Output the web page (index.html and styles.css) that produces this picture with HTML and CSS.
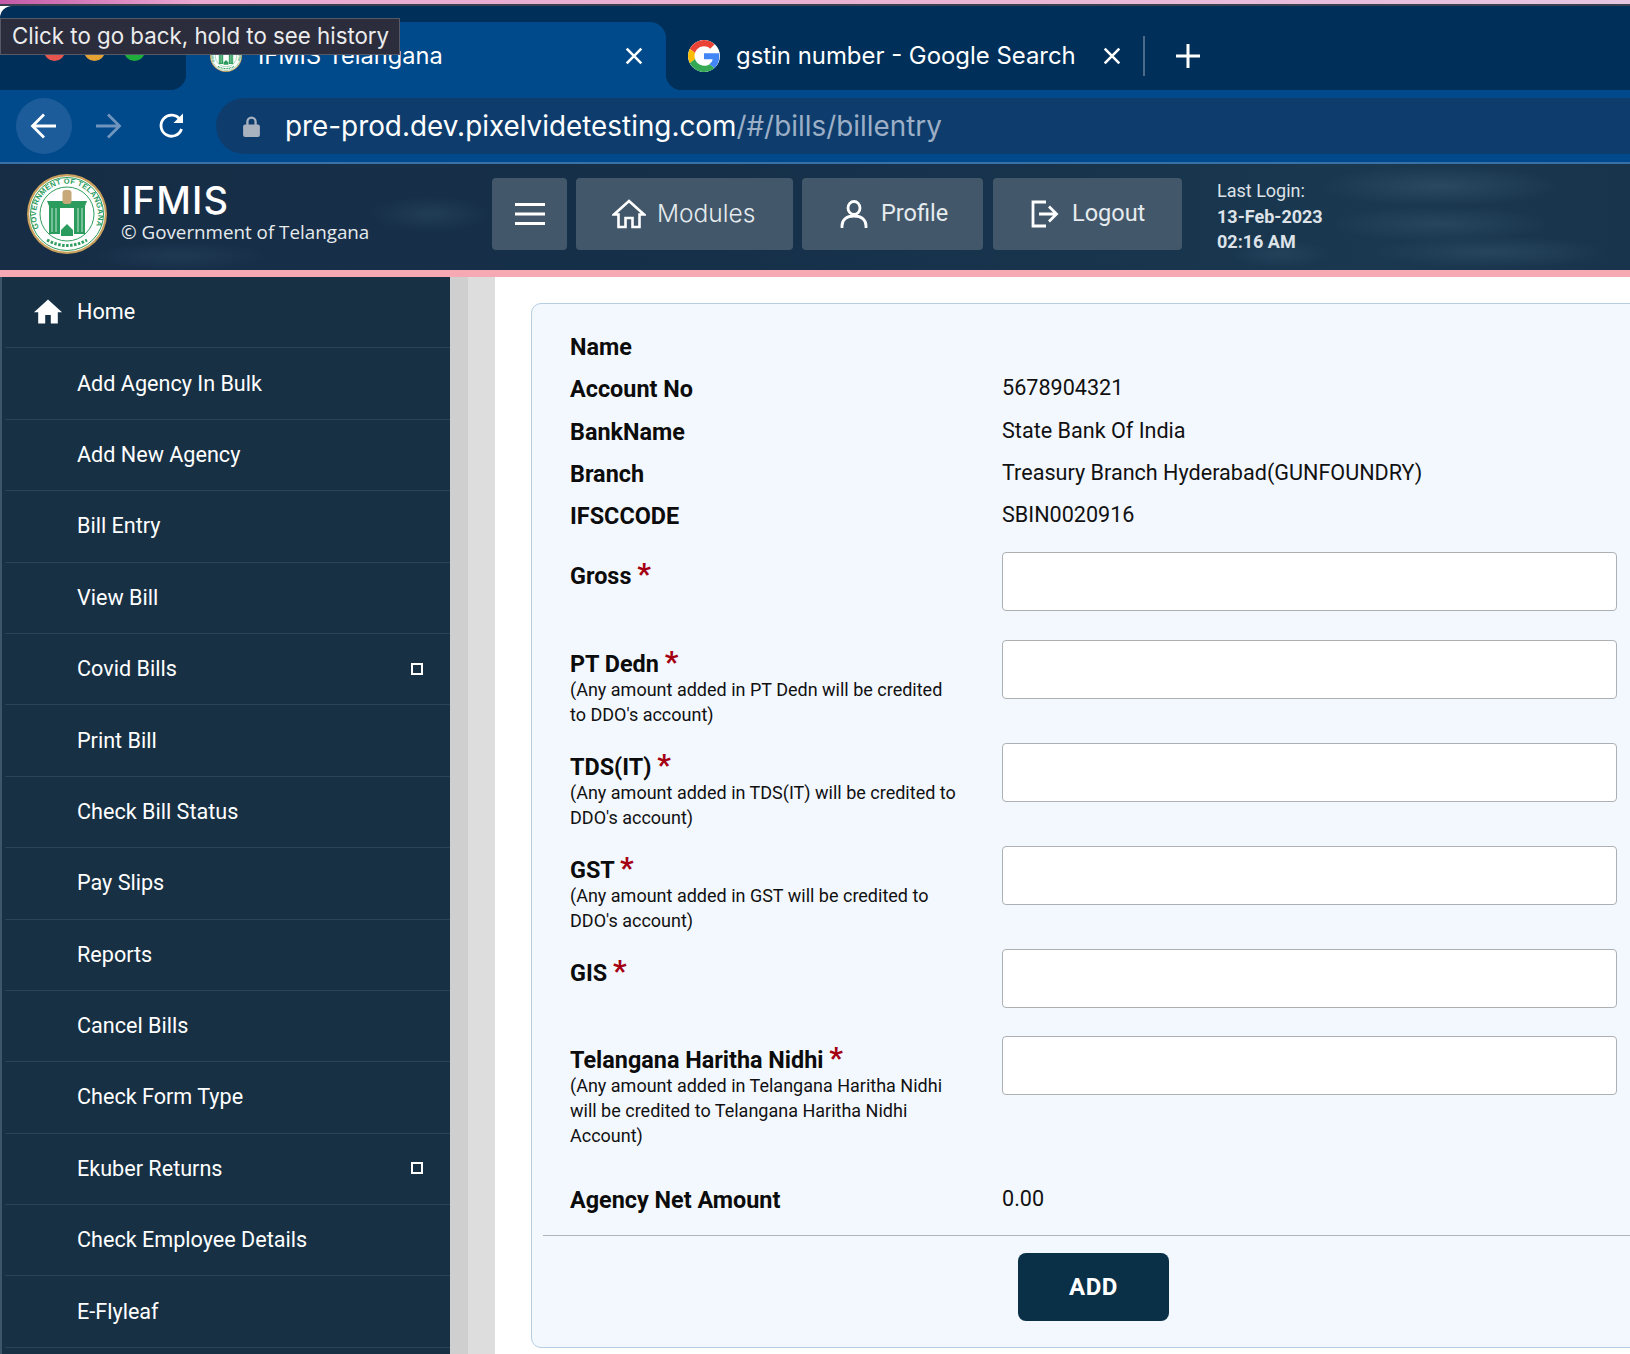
FILE: index.html
```html
<!DOCTYPE html>
<html lang="en">
<head>
  <meta charset="UTF-8"/>
  <title>IFMIS Telangana</title>
  <link rel="stylesheet" href="styles.css">
</head>
<body>
  <svg class="defs" width="0" height="0">
    <defs>
      <symbol id="emblem" viewBox="0 0 80 80">
        <circle cx="40" cy="40" r="40" fill="#c9a15c"/>
        <circle cx="40" cy="40" r="37.800" fill="#fff"/>
        <circle cx="40" cy="40" r="36.500" fill="none" stroke="#2f9e5f" stroke-width="1"/>
        <circle cx="40" cy="40" r="27" fill="none" stroke="#2f9e5f" stroke-width="1"/>
        <path id="emblem-arc" d="M12 54a31 31 0 1 1 56 0" fill="none"/>
        <text class="emblem-text"><textPath href="#emblem-arc" textLength="122">GOVERNMENT OF TELANGANA</textPath></text>
        <path d="M20 27h40l-2 5v28H22V32z" fill="#2c9c5e"/>
        <rect x="33" y="34" width="14" height="26" fill="#fff"/>
        <path d="M34 62v-6l6-6 6 6v6z" fill="#2c9c5e"/>
        <rect x="35.500" y="16" width="9" height="14" rx="3" fill="#c7a878"/>
        <path d="M25 34v24M29 34v24M51 34v24M55 34v24" stroke="#bfe5cf" stroke-width="1"/>
        <path d="M20 66q20 11 40 0" fill="none" stroke="#2f9e5f" stroke-width="3" stroke-dasharray="2.500 1.500"/>
      </symbol>
    </defs>
  </svg>

  <div class="top-strip"></div>

  <div class="tab-strip">
    <div class="traffic">
      <span class="light red"></span>
      <span class="light amber"></span>
      <span class="light green"></span>
    </div>
    <div class="tab tab-active">
      <svg class="favicon" viewBox="0 0 80 80"><use href="#emblem"/></svg>
      <span class="tab-title">IFMIS Telangana</span>
      <svg class="tab-close" viewBox="0 0 16 16"><path d="M1.500 1.500l13 13M14.500 1.500l-13 13"/></svg>
    </div>
    <div class="tab tab-other">
      <svg class="favicon google" viewBox="0 0 48 48">
        <path fill="#EA4335" d="M24 9.5c3.54 0 6.71 1.22 9.21 3.6l6.85-6.85C35.9 2.38 30.47 0 24 0 14.62 0 6.51 5.38 2.56 13.22l7.98 6.19C12.43 13.72 17.74 9.5 24 9.5z"/>
        <path fill="#4285F4" d="M46.98 24.55c0-1.57-.15-3.09-.38-4.55H24v9.02h12.94c-.58 2.96-2.26 5.48-4.78 7.18l7.73 6c4.51-4.18 7.09-10.36 7.09-17.65z"/>
        <path fill="#FBBC05" d="M10.53 28.59c-.48-1.45-.76-2.99-.76-4.59s.27-3.14.76-4.59l-7.98-6.19C.92 16.46 0 20.12 0 24c0 3.88.92 7.54 2.56 10.78l7.97-6.19z"/>
        <path fill="#34A853" d="M24 48c6.48 0 11.93-2.13 15.89-5.81l-7.73-6c-2.15 1.45-4.92 2.3-8.16 2.3-6.26 0-11.57-4.22-13.47-9.91l-7.98 6.19C6.51 42.62 14.62 48 24 48z"/>
      </svg>
      <span class="tab-title">gstin number - Google Search</span>
      <svg class="tab-close" viewBox="0 0 16 16"><path d="M1.500 1.500l13 13M14.500 1.500l-13 13"/></svg>
      <span class="tab-divider"></span>
      <svg class="new-tab" viewBox="0 0 26 26"><path d="M13 1v24M1 13h24"/></svg>
    </div>
    <div class="tooltip">Click to go back, hold to see history</div>
  </div>

  <div class="toolbar">
    <span class="nav-btn nav-btn-hover">
      <svg viewBox="0 0 28 28"><path d="M26 14H3M14 2.500L2.500 14 14 25.500"/></svg>
    </span>
    <span class="nav-btn nav-btn-off">
      <svg viewBox="0 0 28 28"><path d="M2 14h23M14 2.500L25.500 14 14 25.500"/></svg>
    </span>
    <span class="nav-btn">
      <svg viewBox="0 0 28 28"><path d="M23.500 17a10.500 10.500 0 1 1-1.500-9.500"/><path class="solid" d="M25 1.500V11h-9.500z"/></svg>
    </span>
    <div class="omnibox">
      <svg class="lock" viewBox="0 0 16 20"><path d="M3 8V5.500a5 5 0 0 1 10 0V8h1a2 2 0 0 1 2 2v8a2 2 0 0 1-2 2H2a2 2 0 0 1-2-2v-8a2 2 0 0 1 2-2zm2.200 0h5.600V5.500a2.800 2.800 0 0 0-5.600 0z"/></svg>
      <span class="url">pre-prod.dev.pixelvidetesting.com<span class="url-path">/#/bills/billentry</span></span>
    </div>
  </div>

  <header class="site-header">
    <div class="brand">
      <svg class="logo" viewBox="0 0 80 80"><use href="#emblem"/></svg>
      <div class="brand-text">
        <div class="brand-name">IFMIS</div>
        <div class="brand-sub">© Government of Telangana</div>
      </div>
    </div>
    <nav class="top-nav">
      <a class="nav-item nav-menu">
        <svg viewBox="0 0 30 24"><path d="M0 2.500h30M0 12h30M0 21.500h30"/></svg>
      </a>
      <a class="nav-item nav-modules">
        <svg viewBox="0 0 34 30"><path d="M17 2L32 15.500h-4.500V28H20.500V19h-7v9H6.500V15.500H2z"/></svg>
        <span class="modules-label">Modules</span>
      </a>
      <a class="nav-item nav-profile">
        <svg viewBox="0 0 28 28"><ellipse cx="14" cy="8" rx="6" ry="6.500"/><path d="M2 28v-2c0-6 4-10 12-10s12 4 12 10v2"/></svg>
        <span>Profile</span>
      </a>
      <a class="nav-item nav-logout">
        <svg viewBox="0 0 28 28"><path d="M15 2H2v24h13M8 14h17M18 6.500l7.500 7.500-7.500 7.500"/></svg>
        <span>Logout</span>
      </a>
    </nav>
    <div class="last-login">
      <div>Last Login:</div>
      <div class="strong">13-Feb-2023</div>
      <div class="strong">02:16 AM</div>
    </div>
  </header>
  <div class="header-rule"></div>

  <div class="page">
    <aside class="sidebar">
      <a class="side-item">
        <svg class="side-home" viewBox="2 3 20 17"><path d="M10 20v-6h4v6h5v-8h3L12 3 2 12h3v8z"/></svg>
        Home
      </a>
      <a class="side-item">Add Agency In Bulk</a>
      <a class="side-item">Add New Agency</a>
      <a class="side-item">Bill Entry</a>
      <a class="side-item">View Bill</a>
      <a class="side-item">Covid Bills<span class="side-toggle"></span></a>
      <a class="side-item">Print Bill</a>
      <a class="side-item">Check Bill Status</a>
      <a class="side-item">Pay Slips</a>
      <a class="side-item">Reports</a>
      <a class="side-item">Cancel Bills</a>
      <a class="side-item">Check Form Type</a>
      <a class="side-item">Ekuber Returns<span class="side-toggle"></span></a>
      <a class="side-item">Check Employee Details</a>
      <a class="side-item">E-Flyleaf</a>
    </aside>
    <div class="scroll-thumb"></div>
    <div class="scroll-track"></div>

    <main class="content">
      <section class="card">
        <div class="card-body">
          <div class="info-row"><label>Name</label><span class="info-value"></span></div>
          <div class="info-row"><label>Account No</label><span class="info-value">5678904321</span></div>
          <div class="info-row"><label>BankName</label><span class="info-value">State Bank Of India</span></div>
          <div class="info-row"><label>Branch</label><span class="info-value">Treasury Branch Hyderabad(GUNFOUNDRY)</span></div>
          <div class="info-row"><label>IFSCCODE</label><span class="info-value">SBIN0020916</span></div>

          <div class="field-row first">
            <div class="field-label"><label>Gross <span class="req">*</span></label></div>
            <input type="text">
          </div>
          <div class="field-row">
            <div class="field-label"><label>PT Dedn <span class="req">*</span></label><small>(Any amount added in PT Dedn will be credited to DDO's account)</small></div>
            <input type="text">
          </div>
          <div class="field-row">
            <div class="field-label"><label>TDS(IT) <span class="req">*</span></label><small>(Any amount added in TDS(IT) will be credited to DDO's account)</small></div>
            <input type="text">
          </div>
          <div class="field-row">
            <div class="field-label"><label>GST <span class="req">*</span></label><small>(Any amount added in GST will be credited to DDO's account)</small></div>
            <input type="text">
          </div>
          <div class="field-row">
            <div class="field-label"><label>GIS <span class="req">*</span></label></div>
            <input type="text">
          </div>
          <div class="field-row">
            <div class="field-label"><label>Telangana Haritha Nidhi <span class="req">*</span></label><small>(Any amount added in Telangana Haritha Nidhi will be credited to Telangana Haritha Nidhi Account)</small></div>
            <input type="text">
          </div>

          <div class="info-row net-row"><label>Agency Net Amount</label><span class="info-value">0.00</span></div>
        </div>
        <div class="card-footer">
          <button class="add-btn">ADD</button>
        </div>
      </section>
    </main>
  </div>
</body>
</html>
```

FILE: styles.css
```css
* {
  box-sizing: border-box;
}

html, body {
  margin: 0;
  width: 1630px;
  height: 1354px;
  overflow: hidden;
}

body {
  font-family: Roboto, sans-serif;
  background: #fff;
  color: #000;
}

.defs {
  display: block;
  height: 0;
}

.emblem-text {
  font-family: "Liberation Sans", sans-serif;
  font-size: 7.600px;
  font-weight: bold;
  fill: #2c9c5e;
}

/* browser chrome */
.top-strip {
  height: 6px;
  background: linear-gradient(90deg, #c45aa8 0, #e9a9d2 12%, #eab4d4 55%, #e6c6e2 100%);
  border-bottom: 2px solid #39404f;
}

.tab-strip {
  position: relative;
  display: flex;
  align-items: flex-end;
  height: 84px;
  background: #002f59;
  border-top-left-radius: 12px;
  font-family: Inter, sans-serif;
  color: #fff;
}

.traffic {
  display: flex;
  gap: 19px;
  width: 186px;
  height: 68px;
  padding: 18px 0 0 44px;
}

.light {
  width: 21px;
  height: 21px;
  border-radius: 50%;
}

.red { background: #e8554e; }
.amber { background: #e3a233; }
.green { background: #1fae3c; }

.tab {
  display: flex;
  align-items: center;
  height: 68px;
  font-size: 23.900px;
}

.tab-title {
  margin-top: -2px;
}

.tab-active {
  position: relative;
  width: 480px;
  padding: 0 23px 0 24px;
  background: #004a8c;
  border-radius: 16px 16px 0 0;
  font-size: 23.600px;
}

.tab-active::before,
.tab-active::after {
  content: "";
  position: absolute;
  bottom: 0;
  width: 16px;
  height: 16px;
}

.tab-active::before {
  left: -16px;
  background: radial-gradient(circle at 0 0, transparent 16px, #004a8c 16.500px);
}

.tab-active::after {
  right: -16px;
  background: radial-gradient(circle at 100% 0, transparent 16px, #004a8c 16.500px);
}

.favicon {
  width: 32px;
  height: 32px;
  flex: none;
}

.google {
  background: #fff;
  border-radius: 50%;
}

.tab-active .tab-title {
  margin-left: 16px;
}

.tab-close {
  width: 18px;
  height: 18px;
  margin-left: auto;
  fill: none;
  stroke: #fff;
  stroke-width: 2.300;
}

.tab-other {
  padding-left: 22px;
}

.tab-other .tab-title {
  margin-left: 16px;
}

.tab-other .tab-close {
  margin-left: 27px;
}

.tab-divider {
  width: 2px;
  height: 40px;
  margin-left: 22px;
  background: #4a6b8b;
}

.new-tab {
  width: 26px;
  height: 26px;
  margin-left: 30px;
  fill: none;
  stroke: #fff;
  stroke-width: 3;
}

.tooltip {
  position: absolute;
  left: 0;
  top: 12px;
  width: 400px;
  height: 37px;
  padding-left: 11px;
  background: #2b2c3c;
  border: 1px solid #565a66;
  color: #ececec;
  font-size: 22.300px;
  line-height: 34px;
  white-space: nowrap;
}

.toolbar {
  display: flex;
  align-items: center;
  height: 74px;
  padding: 0 0 0 16px;
  background: #004a8c;
  border-bottom: 2px solid #3a70a8;
}

.nav-btn {
  display: flex;
  align-items: center;
  justify-content: center;
  width: 56px;
  height: 56px;
  margin-right: 8px;
  border-radius: 50%;
}

.nav-btn svg {
  width: 28px;
  height: 28px;
  fill: none;
  stroke: #fff;
  stroke-width: 2.800;
}

.nav-btn .solid {
  fill: #fff;
  stroke: none;
}

.nav-btn-hover {
  background: #1d5c9b;
}

.nav-btn-off svg {
  stroke: #6f94bd;
}

.omnibox {
  display: flex;
  align-items: center;
  flex: 1;
  height: 56px;
  margin-left: 8px;
  padding-left: 27px;
  background: #0e3d6d;
  border-radius: 28px 0 0 28px;
  font-family: Inter, sans-serif;
}

.lock {
  width: 17px;
  height: 21px;
  fill: #a9b2bf;
}

.url {
  margin-left: 25px;
  font-size: 27.850px;
  color: #fff;
}

.url-path {
  color: #9cafc6;
}

/* site header */
.site-header {
  display: flex;
  align-items: center;
  height: 106px;
  padding: 0 0 6px 27px;
  color: #fff;
  background-color: #172f48;
  background-image:
    radial-gradient(ellipse 60px 18px at 430px 50px, rgba(70,110,130,0.22), transparent),
    radial-gradient(ellipse 90px 14px at 180px 92px, rgba(70,110,140,0.18), transparent),
    radial-gradient(ellipse 120px 20px at 1440px 22px, rgba(100,140,160,0.22), transparent),
    radial-gradient(ellipse 110px 18px at 1440px 60px, rgba(100,140,160,0.18), transparent),
    radial-gradient(ellipse 120px 16px at 1490px 88px, rgba(100,140,160,0.18), transparent),
    radial-gradient(ellipse 50px 14px at 1280px 90px, rgba(80,120,140,0.18), transparent),
    linear-gradient(90deg, #172d46 0, #16304a 45%, #1a3850 85%, #18344c 100%);
}

.brand {
  display: flex;
  align-items: center;
  width: 465px;
  flex: none;
}

.logo {
  width: 80px;
  height: 80px;
  flex: none;
}

.brand-text {
  margin: -5px 0 0 14px;
}

.brand-name {
  font-family: Inter, sans-serif;
  font-size: 38px;
  font-weight: 500;
  line-height: 40px;
  letter-spacing: 1.200px;
}

.brand-sub {
  font-family: "Open Sans", sans-serif;
  font-size: 18.800px;
  line-height: 24px;
  color: #e7ebee;
}

.top-nav {
  display: flex;
  gap: 9px;
  flex: none;
}

.nav-item {
  display: flex;
  align-items: center;
  height: 72px;
  background: #42586a;
  border-radius: 4px;
  color: #e6ebef;
  font-size: 23.500px;
}

.nav-item span {
  margin-top: -2px;
}

.nav-item svg {
  fill: none;
  stroke: #fff;
  stroke-width: 2.800;
  flex: none;
}

.nav-menu {
  justify-content: center;
  width: 75px;
}

.nav-menu svg {
  width: 30px;
  height: 24px;
  stroke-width: 3.200;
}

.nav-modules {
  width: 217px;
  padding-left: 36px;
}

.nav-modules svg {
  width: 34px;
  height: 30px;
  stroke-width: 2.600;
}

.modules-label {
  margin-left: 11px;
  font-family: Inter, sans-serif;
  font-size: 24.500px;
  font-weight: 300;
}

.nav-profile {
  width: 181px;
  padding-left: 38px;
}

.nav-profile svg {
  width: 28px;
  height: 28px;
  margin-right: 13px;
}

.nav-logout {
  width: 189px;
  margin-left: 1px;
  padding-left: 38px;
}

.nav-logout svg {
  width: 28px;
  height: 28px;
  margin-right: 13px;
}

.last-login {
  margin: 5px 0 0 35px;
  font-size: 18px;
  line-height: 25.800px;
  color: #dde3e8;
}

.last-login .strong {
  font-weight: 700;
}

.header-rule {
  height: 7px;
  background: #f6a9b2;
}

/* page body */
.page {
  display: flex;
  height: 1077px;
}

.sidebar {
  width: 450px;
  flex: none;
  background: #173044;
  border-left: 2px solid #3e566b;
  overflow: hidden;
}

.side-item {
  position: relative;
  display: flex;
  align-items: center;
  height: 71.400px;
  margin-left: 3px;
  padding: 0 0 1px 72px;
  border-bottom: 1px solid #2a4359;
  color: #fff;
  font-size: 21.600px;
}

.side-home {
  position: absolute;
  left: 29px;
  width: 28px;
  height: 25px;
  fill: #fff;
}

.side-toggle {
  position: absolute;
  right: 27px;
  width: 12px;
  height: 12px;
  border: 2px solid #fff;
}

.scroll-thumb {
  width: 18px;
  flex: none;
  background: #cfcfcf;
}

.scroll-track {
  width: 27px;
  flex: none;
  background: #dddddd;
}

.content {
  flex: none;
  width: 1135px;
  padding: 26px 0 0 36px;
  overflow: hidden;
}

.card {
  width: 1300px;
  height: 1045px;
  padding: 22px 0 27px 11px;
  background: #f3f8ff;
  border: 1px solid #b4cde2;
  border-radius: 10px;
}

.card-body {
  padding-left: 27px;
}

.info-row {
  display: flex;
  align-items: center;
  height: 42.300px;
}

label {
  font-size: 23.400px;
  font-weight: 700;
  line-height: 26px;
  color: #0c0c0c;
}

.info-row label {
  width: 432px;
  flex: none;
}

.info-value {
  padding-bottom: 3px;
  font-size: 21.600px;
  color: #111;
}

.field-row {
  display: flex;
  align-items: flex-start;
  margin-bottom: 16px;
}

.field-row.first {
  margin-top: 15px;
}

.field-label {
  width: 432px;
  min-height: 71.500px;
  padding: 11px 42px 0 0;
  flex: none;
}

.field-label small {
  display: block;
  font-size: 18px;
  line-height: 25px;
  color: #111;
}

.req {
  color: #a50012;
  font-size: 30px;
  line-height: 20px;
}

input {
  display: block;
  width: 615px;
  height: 59px;
  background: #fff;
  border: 1px solid #adb0b3;
  border-radius: 4px;
}

.net-row {
  margin-top: 30px;
}

.card-footer {
  margin-top: 14px;
  padding-top: 17px;
  border-top: 1px solid #b0b4b8;
}

.add-btn {
  display: block;
  width: 151px;
  height: 68px;
  margin-left: 475px;
  background: #0a3047;
  border: none;
  border-radius: 8px;
  color: #fff;
  font-family: Roboto, sans-serif;
  font-size: 24px;
  font-weight: 700;
  letter-spacing: 0.5px;
}
```
